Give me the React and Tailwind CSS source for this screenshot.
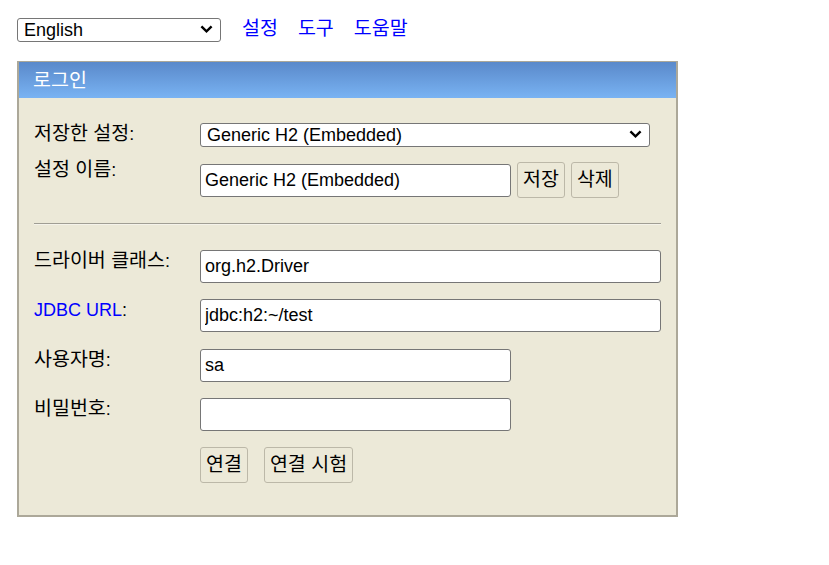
import React from "react";

function K({ children }) {
  return <span className="text-[19.5px] leading-[12px]">{children}</span>;
}

function Chevron() {
  return (
    <svg
      width="13"
      height="8"
      viewBox="0 0 13 8"
      className="absolute right-[8px] top-1/2 -translate-y-1/2 pointer-events-none"
    >
      <path d="M1.4 1.4 L6.5 6.3 L11.6 1.4" fill="none" stroke="#000" strokeWidth="2.4" />
    </svg>
  );
}

function Label({ children, className = "" }) {
  return <div className={"w-[166px] shrink-0 leading-[21px] " + className}>{children}</div>;
}

function TextInput({ value, className = "" }) {
  return (
    <input
      readOnly
      value={value}
      className={
        "h-[33px] border border-[#767676] rounded-[3px] bg-white pl-[4px] text-[18px] text-black outline-none " +
        className
      }
    />
  );
}

function Btn({ children, className = "" }) {
  return (
    <button className={"h-[36px] px-[5px] border border-[#bcb8a8] rounded-[3px] bg-transparent text-[18px] leading-[21px] text-black " + className}>
      {children}
    </button>
  );
}

export default function App() {
  return (
    <div className="min-h-screen bg-white p-[17px] text-[18px] text-black font-[family-name:'Liberation_Sans','Noto_Sans_CJK_KR',sans-serif]">
      <div className="flex items-center h-[24px]">
        <div className="relative w-[204px] h-[24px]">
          <select className="appearance-none w-full h-full border border-[#767676] rounded-[3px] bg-white pl-[6px] text-[18px] leading-[22px] text-black outline-none">
            <option>English</option>
          </select>
          <Chevron />
        </div>
        <a className="ml-[21px] text-[#0000ff] leading-[21px]"><K>설정</K></a>
        <a className="ml-[20px] text-[#0000ff] leading-[21px]"><K>도구</K></a>
        <a className="ml-[20px] text-[#0000ff] leading-[21px]"><K>도움말</K></a>
      </div>

      <div className="mt-[20px] w-[661px] bg-[#ece9d8] border-t border-x-2 border-b-2 border-[#aca899]">
        <div className="h-[36px] flex items-center pl-[14px] text-white leading-[21px] bg-linear-to-b from-[#5a89ca] to-[#79b3f3]">
          <K>로그인</K>
        </div>
        <div className="px-[15px] pt-[24px] pb-[32px]">
          <div className="flex items-start">
            <Label className="mt-[2px]"><K>저장한 설정</K>:</Label>
            <div className="relative w-[450px] h-[24px]">
              <select className="appearance-none w-full h-full border border-[#767676] rounded-[3px] bg-white pl-[6px] text-[18px] leading-[22px] text-black outline-none">
                <option>Generic H2 (Embedded)</option>
              </select>
              <Chevron />
            </div>
          </div>

          <div className="flex items-start mt-[14px]">
            <Label><K>설정 이름</K>:</Label>
            <TextInput value="Generic H2 (Embedded)" className="mt-[4px] w-[311px]" />
            <Btn className="ml-[6px] mt-[2px]"><K>저장</K></Btn>
            <Btn className="ml-[6px] mt-[2px]"><K>삭제</K></Btn>
          </div>

          <div className="mt-[25px] border-t border-t-[#a09e94] border-b border-b-[#f5f3ea]" />

          <div className="flex items-start mt-[25px]">
            <Label className="mt-[1px]"><K>드라이버 클래스</K>:</Label>
            <TextInput value="org.h2.Driver" className="w-[462px]" />
          </div>

          <div className="flex items-start mt-[16px]">
            <Label className="mt-[1px]">
              <a className="text-[#0000ff]">JDBC URL</a>:
            </Label>
            <TextInput value="jdbc:h2:~/test" className="w-[462px]" />
          </div>

          <div className="flex items-start mt-[17px]">
            <Label className="mt-[1px]"><K>사용자명</K>:</Label>
            <TextInput value="sa" className="w-[311px]" />
          </div>

          <div className="flex items-start mt-[16px]">
            <Label className="mt-[1px]"><K>비밀번호</K>:</Label>
            <TextInput value="" className="w-[311px]" />
          </div>

          <div className="flex items-start mt-[16px] pl-[166px]">
            <Btn><K>연결</K></Btn>
            <Btn className="ml-[16px]"><K>연결 시험</K></Btn>
          </div>
        </div>
      </div>
    </div>
  );
}
